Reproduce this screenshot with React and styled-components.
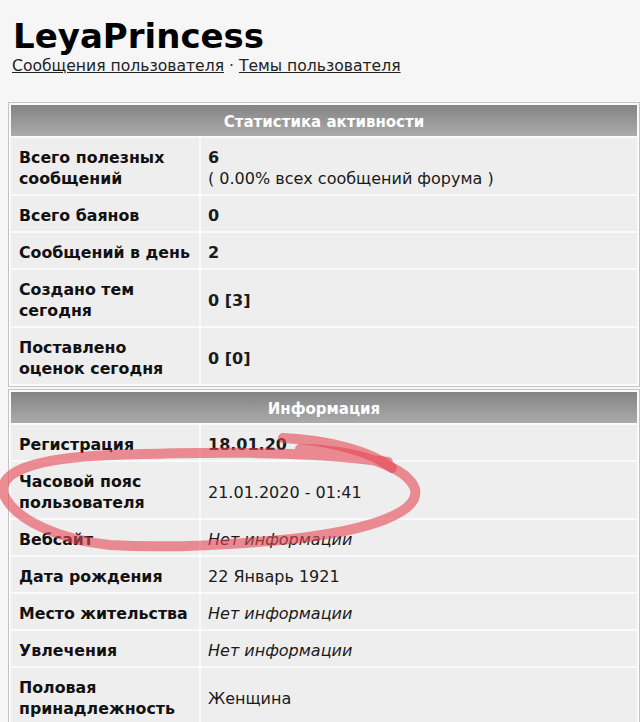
import React from "react"
import styled, { createGlobalStyle } from "styled-components"

const GlobalStyle = createGlobalStyle`
  html, body {
    margin: 0;
    padding: 0;
    background: #f6f6f6;
  }
  body {
    font-family: "DejaVu Sans", Verdana, sans-serif;
    color: #111;
  }
`

const Page = styled.div`
  position: relative;
  width: 640px;
  height: 722px;
  overflow: hidden;
  padding-top: 16px;
  box-sizing: border-box;
`

const UserHead = styled.div`
  padding-left: 12px;
  margin-bottom: 25px;
`

const UserName = styled.h1`
  margin: 0 0 0 1px;
  font-size: 34px;
  line-height: 40px;
  font-weight: 700;
  color: #000;
`

const UserLinks = styled.div`
  font-size: 15.6px;
  line-height: 21px;
  color: #333;
  & a {
    color: #222;
    text-decoration: underline;
  }
`

const Panel = styled.div`
  display: grid;
  grid-template-columns: 188px 1fr;
  gap: 2px;
  padding: 2px;
  margin: 0 0 2px 8px;
  width: 632px;
  box-sizing: border-box;
  background: #fafafa;
  border: 1px solid #c4c4c4;
`

const PanelTitle = styled.div`
  grid-column: 1 / -1;
  height: 31px;
  padding-top: 3px;
  box-sizing: border-box;
  display: flex;
  align-items: center;
  justify-content: center;
  background: linear-gradient(#848484, #ababab);
  color: #fff;
  font-size: 15px;
  font-weight: 700;
`

const Label = styled.div`
  background: #eeeeee;
  padding: 9px 2px 5px 8px;
  font-size: 15.8px;
  line-height: 21px;
  font-weight: 700;
  color: #111;
  white-space: nowrap;
  display: flex;
  align-items: center;
`

const Value = styled.div`
  background: #eeeeee;
  padding: 9px 7px 5px;
  font-size: 16px;
  line-height: 21px;
  color: #1a1a1a;
  font-weight: ${(p) => (p.bold ? 700 : 400)};
  font-style: ${(p) => (p.empty ? "italic" : "normal")};
  display: flex;
  flex-direction: column;
  justify-content: center;
  & span {
    font-weight: 400;
  }
`

const Scribble = styled.svg`
  position: absolute;
  left: 0;
  top: 0;
  pointer-events: none;
`

const stats = [
  { label: ["Всего полезных", "сообщений"], value: "6", note: "( 0.00% всех сообщений форума )", bold: true },
  { label: ["Всего баянов"], value: "0", bold: true },
  { label: ["Сообщений в день"], value: "2", bold: true },
  { label: ["Создано тем", "сегодня"], value: "0 [3]", bold: true },
  { label: ["Поставлено", "оценок сегодня"], value: "0 [0]", bold: true },
]

const info = [
  { label: ["Регистрация"], value: "18.01.20", bold: true },
  { label: ["Часовой пояс", "пользователя"], value: "21.01.2020 - 01:41" },
  { label: ["Вебсайт"], value: "Нет информации", empty: true },
  { label: ["Дата рождения"], value: "22 Январь 1921" },
  { label: ["Место жительства"], value: "Нет информации", empty: true },
  { label: ["Увлечения"], value: "Нет информации", empty: true },
  { label: ["Половая", "принадлежность"], value: "Женщина" },
]

const InfoPanel = ({ title, rows }) => (
  <Panel>
    <PanelTitle>{title}</PanelTitle>
    {rows.map((r) => (
      <React.Fragment key={r.label.join(" ")}>
        <Label>
          <div>
            {r.label.map((line, i) => (
              <React.Fragment key={line}>
                {i > 0 && <br />}
                {line}
              </React.Fragment>
            ))}
          </div>
        </Label>
        <Value bold={r.bold} empty={r.empty}>
          <div>{r.value}</div>
          {r.note && <span>{r.note}</span>}
        </Value>
      </React.Fragment>
    ))}
  </Panel>
)

export default function App() {
  return (
    <Page>
      <GlobalStyle />
      <UserHead>
        <UserName>LeyaPrincess</UserName>
        <UserLinks>
          <a href="#posts">Сообщения пользователя</a> · <a href="#topics">Темы пользователя</a>
        </UserLinks>
      </UserHead>
      <InfoPanel title="Статистика активности" rows={stats} />
      <InfoPanel title="Информация" rows={info} />

      {/* red marker loop drawn over the screenshot */}
      <Scribble width="640" height="722" viewBox="0 0 640 722">
        <g fill="none" stroke="rgb(230, 70, 84)" strokeOpacity="0.6" strokeWidth="10" strokeLinecap="round" strokeLinejoin="round">
          <path d="M283 438 C 330 440, 372 452, 392 468" />
          <path d="M300 449 C 360 450, 408 468, 415 489 C 420 512, 372 530, 292 539 C 220 546, 160 548, 110 545 C 60 540, 15 520, 4 495 C -4 470, 40 458, 110 455 C 200 452, 300 450, 388 462" />
        </g>
      </Scribble>
    </Page>
  )
}
